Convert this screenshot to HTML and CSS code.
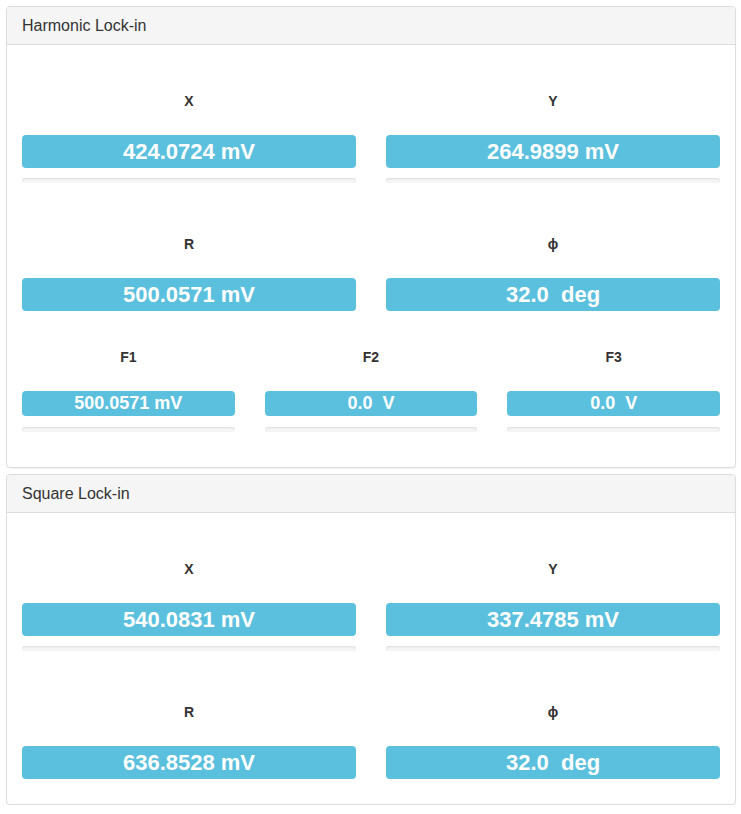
FILE: index.html
```html
<!DOCTYPE html>
<html>
<head>
<meta charset="utf-8">
<link rel="stylesheet" href="styles.css">
</head>
<body>
<div class="page">
  <div class="panel">
    <div class="panel-heading">Harmonic Lock-in</div>
    <div class="panel-body">
      <div class="grid two">
        <div class="cell">
          <div class="label">X</div>
          <div class="bar">424.0724 mV</div>
          <div class="progress"></div>
        </div>
        <div class="cell">
          <div class="label">Y</div>
          <div class="bar">264.9899 mV</div>
          <div class="progress"></div>
        </div>
      </div>
      <div class="grid two">
        <div class="cell">
          <div class="label">R</div>
          <div class="bar bar-end">500.0571 mV</div>
        </div>
        <div class="cell">
          <div class="label">ϕ</div>
          <div class="bar bar-end">32.0&nbsp; deg</div>
        </div>
      </div>
      <div class="grid three">
        <div class="cell">
          <div class="label">F1</div>
          <div class="bar small">500.0571 mV</div>
          <div class="progress small-progress"></div>
        </div>
        <div class="cell">
          <div class="label">F2</div>
          <div class="bar small">0.0&nbsp; V</div>
          <div class="progress small-progress"></div>
        </div>
        <div class="cell">
          <div class="label">F3</div>
          <div class="bar small">0.0&nbsp; V</div>
          <div class="progress small-progress"></div>
        </div>
      </div>
    </div>
  </div>
  <div class="panel">
    <div class="panel-heading">Square Lock-in</div>
    <div class="panel-body body-last">
      <div class="grid two">
        <div class="cell">
          <div class="label">X</div>
          <div class="bar">540.0831 mV</div>
          <div class="progress"></div>
        </div>
        <div class="cell">
          <div class="label">Y</div>
          <div class="bar">337.4785 mV</div>
          <div class="progress"></div>
        </div>
      </div>
      <div class="grid two">
        <div class="cell">
          <div class="label">R</div>
          <div class="bar bar-end">636.8528 mV</div>
        </div>
        <div class="cell">
          <div class="label">ϕ</div>
          <div class="bar bar-end">32.0&nbsp; deg</div>
        </div>
      </div>
    </div>
  </div>
</div>
</body>
</html>
```

FILE: styles.css
```css
* { box-sizing: border-box; }
html, body { margin: 0; padding: 0; background: #fff; }
body {
  font-family: "Liberation Sans", Arial, sans-serif;
  color: #333;
  font-size: 14px;
}
.page {
  padding: 6px 5px 0 6px;
  display: flex;
  flex-direction: column;
  gap: 6px;
}
.panel {
  border: 1px solid #ddd;
  border-radius: 4px;
  background: #fff;
  box-shadow: 0 1px 1px rgba(0,0,0,0.05);
}
.panel-heading {
  background: #f5f5f5;
  border-bottom: 1px solid #ddd;
  border-radius: 3px 3px 0 0;
  padding: 0 15px;
  height: 38px;
  line-height: 37px;
  font-size: 16px;
  color: #333;
}
.panel-body {
  padding: 15px;
}
.panel-body.body-last {
  padding-bottom: 20px;
}
.grid {
  display: grid;
  column-gap: 30px;
}
.grid.two { grid-template-columns: 1fr 1fr; }
.grid.three { grid-template-columns: 1fr 1fr 1fr; }
.cell {
  padding-top: 31px;
}
.label {
  height: 20px;
  line-height: 20px;
  font-size: 14px;
  font-weight: bold;
  text-align: center;
  color: #333;
  margin-bottom: 24px;
}
.bar {
  background: #5bc0de;
  color: #fff;
  font-weight: bold;
  font-size: 22px;
  height: 33px;
  line-height: 33px;
  text-align: center;
  border-radius: 4px;
  white-space: nowrap;
}
.bar.bar-end { margin-bottom: 5px; }
.bar.small {
  font-size: 18px;
  height: 25px;
  line-height: 25px;
}
.progress {
  height: 5px;
  margin-top: 10px;
  margin-bottom: 20px;
  background: #f5f5f5;
  border-radius: 3px;
  box-shadow: inset 0 1px 2px rgba(0,0,0,0.1);
}
.progress.small-progress { margin-top: 11px; }
```
